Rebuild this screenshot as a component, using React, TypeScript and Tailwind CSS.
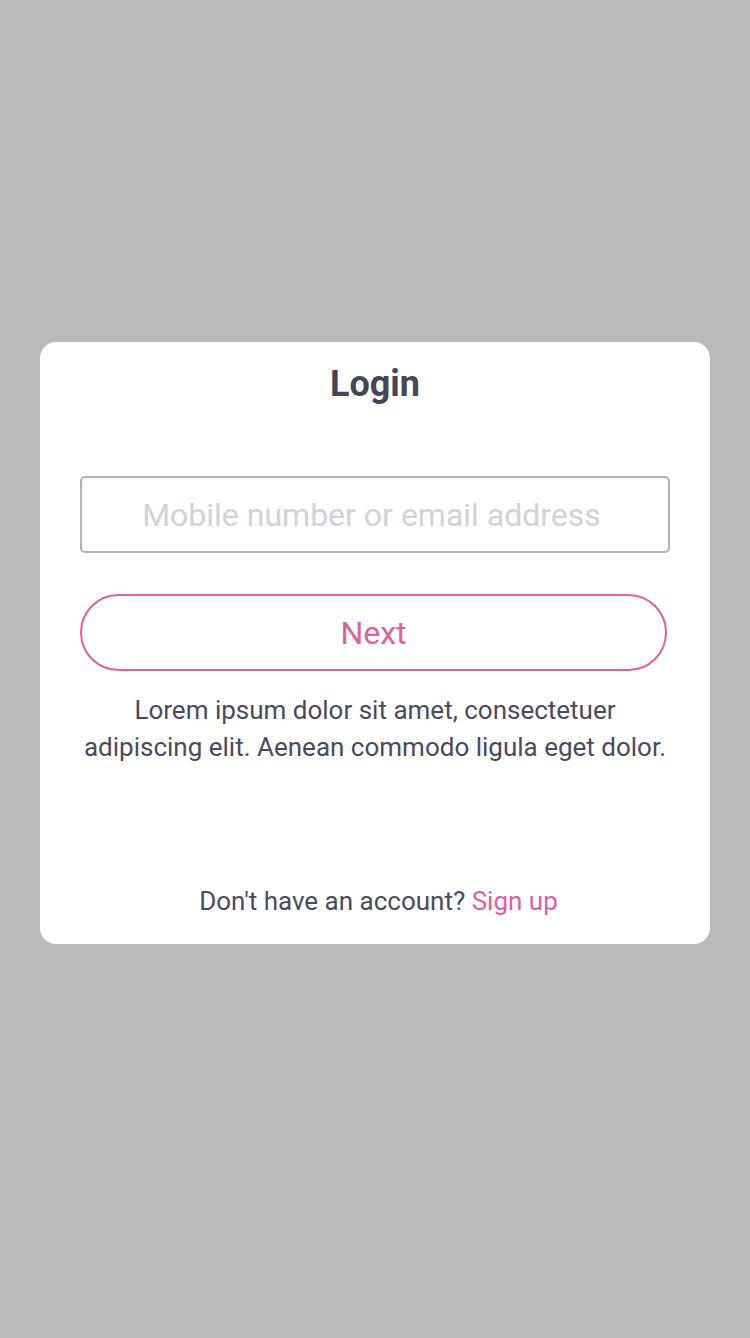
export default function App() {
  return (
    <main className="min-h-[1338px] bg-[#b9babc] pt-[342px] px-10" style={{ fontFamily: "Roboto, 'Liberation Sans', sans-serif" }}>
      <div className="bg-white rounded-[16px] h-[602px] flex flex-col items-center px-10 pt-[21px]">
        <h1 className="text-[36px] leading-[42px] font-bold text-[#45465a]">Login</h1>

        <input
          type="text"
          placeholder="Mobile number or email address"
          className="mt-[71px] w-full h-[77px] pr-[7px] border-2 border-[#b3b3b7] rounded-[5px] text-center text-[32px] text-[#45465a] placeholder:text-[#d2d2d8] shadow-[inset_0_1px_3px_rgba(0,0,0,0.08)] outline-none"
        />

        <button
          type="button"
          className="mt-[41px] w-[587px] self-start h-[77px] border-2 border-[#e0609f] rounded-full text-[32px] text-[#e0609f]"
        >
          Next
        </button>

        <p className="mt-[21px] text-center text-[26px] leading-[37px] text-[#4a4b5e]">
          Lorem ipsum dolor sit amet, consectetuer<br />
          adipiscing elit. Aenean commodo ligula eget dolor.
        </p>

        <p className="mt-auto mb-[24px] pl-[7px] text-[26px] leading-[37px] text-[#4a4b5e]">
          Don't have an account? <span className="text-[#e0609f]">Sign up</span>
        </p>
      </div>
    </main>
  )
}
